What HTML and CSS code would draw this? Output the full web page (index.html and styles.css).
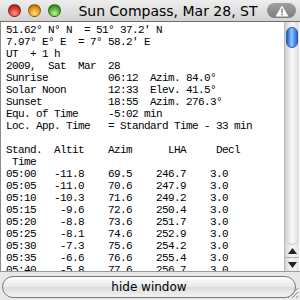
FILE: index.html
```html
<!DOCTYPE html>
<html lang="en">
<head>
	<meta charset="UTF-8">
	<title>Sun Compass</title>
	<link rel="stylesheet" href="styles.css">
</head>
<body>
	<div class="window">
		<div class="titlebar">
			<div class="lights">
				<span class="light red"></span>
				<span class="light orange"></span>
				<span class="light green"></span>
			</div>
			<div class="title">Sun Compass, Mar 28, ST</div>
			<div class="pill">
				<svg width="14" height="12" viewBox="0 0 14 12">
					<path d="M7 0.5 L13.5 11.5 L0.5 11.5 Z" fill="#fff"/>
					<rect x="6.2" y="3.5" width="1.6" height="4.5" fill="#8a8a8a"/>
					<rect x="6.2" y="8.8" width="1.6" height="1.6" fill="#8a8a8a"/>
				</svg>
			</div>
		</div>
		<div class="main">
<pre class="text">51.62° N° N  = 51° 37.2' N
7.97° E° E  = 7° 58.2' E
UT  + 1 h
2009,  Sat  Mar  28
Sunrise          06:12  Azim. 84.0°
Solar Noon       12:33  Elev. 41.5°
Sunset           18:55  Azim. 276.3°
Equ. of Time     -5:02 min
Loc. App. Time   = Standard Time - 33 min

Stand.  Altit    Azim      LHA     Decl
 Time
05:00   -11.8    69.5    246.7    3.0
05:05   -11.0    70.6    247.9    3.0
05:10   -10.3    71.6    249.2    3.0
05:15    -9.6    72.6    250.4    3.0
05:20    -8.8    73.6    251.7    3.0
05:25    -8.1    74.6    252.9    3.0
05:30    -7.3    75.6    254.2    3.0
05:35    -6.6    76.6    255.4    3.0
05:40    -5.8    77.6    256.7    3.0</pre>
			<div class="scrollbar">
				<div class="track">
					<div class="thumb"></div>
				</div>
				<div class="arrow up">
					<svg width="9" height="6" viewBox="0 0 9 6"><path d="M4.5 0 L9 6 L0 6 Z" fill="#222"/></svg>
				</div>
				<div class="arrow down">
					<svg width="9" height="6" viewBox="0 0 9 6"><path d="M0 0 L9 0 L4.5 6 Z" fill="#222"/></svg>
				</div>
			</div>
		</div>
		<div class="footer">
			<div class="button">hide window</div>
			<svg class="grip" width="14" height="14" viewBox="0 0 14 14">
				<path d="M13 3 L3 13 M13 7 L7 13 M13 11 L11 13" stroke="#8a8a8a" stroke-width="1"/>
			</svg>
		</div>
	</div>
</body>
</html>
```

FILE: styles.css
```css
*{
    margin: 0;
    padding: 0;
    box-sizing: border-box;
}
html, body{
    width: 300px;
    height: 300px;
    overflow: hidden;
    background: #e6e6e6;
}
.window{
    width: 300px;
    height: 300px;
    display: flex;
    flex-direction: column;
}
.titlebar{
    height: 22px;
    flex: none;
    display: flex;
    align-items: center;
    position: relative;
    background: linear-gradient(#ededed, #d3d3d3);
    border-bottom: 1px solid #6f6f6f;
}
.lights{
    display: flex;
    gap: 7px;
    padding-left: 8px;
}
.light{
    width: 13px;
    height: 13px;
    border-radius: 50%;
    border: 1px solid rgba(0, 0, 0, .35);
}
.red{
    background: radial-gradient(circle at 50% 75%, #ff9a8a 0, #e0443a 45%, #8e1010 100%);
}
.orange{
    background: radial-gradient(circle at 50% 75%, #ffe08a 0, #f0a020 45%, #9a5200 100%);
}
.green{
    background: radial-gradient(circle at 50% 75%, #c8f59a 0, #5cb83a 45%, #1e6a10 100%);
}
.title{
    flex: 1;
    text-align: center;
    font-family: "DejaVu Sans", sans-serif;
    font-size: 14px;
    color: #000;
    padding-left: 8px;
    white-space: nowrap;
}
.pill{
    width: 29px;
    height: 15px;
    margin-right: 4px;
    border-radius: 8px;
    background: linear-gradient(#a0a0a0, #7e7e7e);
    display: flex;
    align-items: center;
    justify-content: center;
}
.main{
    flex: 1;
    display: flex;
    background: #fff;
    border-left: 1px solid #8a8a8a;
    overflow: hidden;
}
.text{
    flex: 1;
    font-family: "Liberation Mono", monospace;
    font-size: 11px;
    letter-spacing: -0.6px;
    line-height: 12px;
    padding: 2px 0 0 5px;
    color: #000;
    overflow: hidden;
    white-space: pre;
}
.scrollbar{
    width: 15px;
    margin-right: 1px;
    flex: none;
    display: flex;
    flex-direction: column;
    border-left: 1px solid #b8b8b8;
    background: linear-gradient(90deg, #d8d8d8, #f6f6f6 50%, #e4e4e4);
}
.track{
    flex: 1;
    padding: 5px 1px 0;
    border-bottom: 1px solid #c8c8c8;
    border-radius: 0 0 7px 7px;
    background: linear-gradient(90deg, #cfcfcf, #f8f8f8 50%, #dedede);
}
.thumb{
    height: 21px;
    border-radius: 7px;
    background: linear-gradient(90deg, #1e5ec8, #8ec0ff 45%, #5a9cf0 70%, #2566cf);
    border: 1px solid #2a5aa8;
}
.arrow{
    height: 13px;
    display: flex;
    align-items: center;
    justify-content: center;
}
.up{
    border-bottom: 1px solid #b0b0b0;
}
.footer{
    height: 29px;
    flex: none;
    position: relative;
    border-top: 1px solid #9a9a9a;
    padding: 4px 4px 2px 2px;
    background: #e8e8e8;
}
.button{
    height: 22px;
    border-radius: 11px;
    border: 1px solid #7a7a7a;
    background: linear-gradient(#fdfdfd, #e9e9e9 50%, #dcdcdc 51%, #f2f2f2);
    font-family: "DejaVu Sans", sans-serif;
    font-size: 12px;
    line-height: 20px;
    text-align: center;
    color: #000;
}
.grip{
    position: absolute;
    right: 1px;
    bottom: 1px;
}
```
